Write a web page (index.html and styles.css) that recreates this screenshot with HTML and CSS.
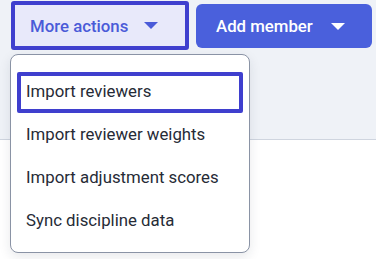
FILE: index.html
```html
<!DOCTYPE html>
<html>
<head>
<meta charset="utf-8">
<link rel="stylesheet" href="styles.css">
</head>
<body>
<div class="band">
  <div class="toolbar">
    <button class="btn btn-secondary">
      <span>More actions</span>
      <svg class="caret" width="14" height="7" viewBox="0 0 14 7"><path d="M0 0H14L7 7Z" fill="currentColor"/></svg>
    </button>
    <button class="btn btn-primary">
      <span>Add member</span>
      <svg class="caret" width="14" height="7" viewBox="0 0 14 7"><path d="M0 0H14L7 7Z" fill="currentColor"/></svg>
    </button>
  </div>
</div>
<div class="menu">
  <div class="item focused">Import reviewers</div>
  <div class="item">Import reviewer weights</div>
  <div class="item">Import adjustment scores</div>
  <div class="item">Sync discipline data</div>
</div>
</body>
</html>
```
FILE: styles.css
```css
html, body {
  margin: 0;
  padding: 0;
  background: #ffffff;
  font-family: Roboto, "Liberation Sans", sans-serif;
}
.band {
  height: 139px;
  background: #eff2f7;
  border-bottom: 1px solid #cfd5df;
}
.toolbar {
  display: flex;
  align-items: flex-start;
  gap: 7px;
  padding: 1px 0 0 11px;
}
.btn {
  display: flex;
  align-items: center;
  justify-content: space-between;
  font-family: Roboto, "Liberation Sans", sans-serif;
  font-size: 16.8px;
  font-weight: 500;
  cursor: pointer;
  box-sizing: border-box;
}
.btn-secondary {
  width: 178px;
  height: 49px;
  border: 4px solid #3f3fce;
  border-radius: 3px;
  background: #e8e9fa;
  color: #4a5bd8;
  padding: 0 27px 0 15px;
}
.btn-primary {
  margin-top: 3px;
  width: 176px;
  height: 44px;
  border: none;
  border-radius: 6px;
  background: #4a60dc;
  color: #ffffff;
  padding: 0 27px 0 20px;
}
.caret { display: block; }
.menu {
  position: absolute;
  left: 10px;
  top: 54px;
  width: 240px;
  height: 199px;
  box-sizing: border-box;
  background: #ffffff;
  border: 1px solid #8a93a5;
  border-radius: 8px;
  box-shadow: 0 4px 12px rgba(30, 40, 60, 0.10);
  padding: 17px 6px 0 6px;
}
.item {
  height: 43px;
  display: flex;
  align-items: center;
  padding: 0 9px 3px;
  box-sizing: border-box;
  font-size: 16.8px;
  color: #262b36;
}
.item.focused {
  height: 41px;
  border: 4px solid #3f3fce;
  border-radius: 2px;
  padding: 0 5px 4px;
  margin-bottom: 1px;
}
```
